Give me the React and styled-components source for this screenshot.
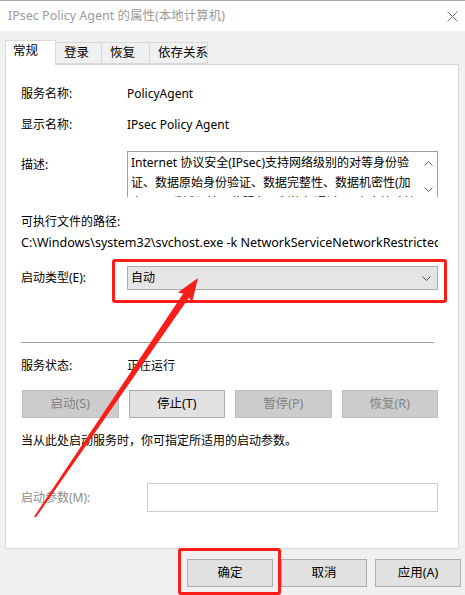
import React from "react";
import styled, { createGlobalStyle } from "styled-components";

const Global = createGlobalStyle`
	html, body {
		margin: 0;
		padding: 0;
		background: #f0f0f0;
	}
	* {
		box-sizing: border-box;
	}
`;

const Window = styled.div`
	position: relative;
	width: 465px;
	height: 595px;
	overflow: hidden;
	background: #f0f0f0;
	font-family: "Noto Sans", "Noto Sans CJK SC", sans-serif;
	font-size: 12px;
	line-height: 20px;
	color: #000;
	display: flex;
	flex-direction: column;
`;

const TitleBar = styled.div`
	height: 31px;
	background: #fff;
	border-top: 1px solid #a6a6a6;
	display: flex;
	align-items: center;
	justify-content: space-between;
	padding: 0 7px 0 8px;
	color: #9b9b9b;
	font-size: 12.5px;
`;

const TabStrip = styled.div`
	display: flex;
	align-items: flex-end;
	margin: 9px 0 0 5px;
	height: 24px;
	position: relative;
	z-index: 1;
`;

const Tab = styled.div`
	width: ${(p) => p.w}px;
	height: ${(p) => (p.active ? 25 : 22)}px;
	margin-bottom: ${(p) => (p.active ? -1 : 0)}px;
	background: ${(p) => (p.active ? "#fff" : "#f0f0f0")};
	border: 1px solid #d9d9d9;
	border-bottom: ${(p) => (p.active ? "none" : "1px solid #d9d9d9")};
	border-left: ${(p) => (p.first || p.active ? "1px solid #d9d9d9" : "none")};
	padding-left: ${(p) => (p.active ? 7 : 8)}px;
	line-height: 20px;
	font-size: 12.5px;
	white-space: nowrap;
`;

const Panel = styled.div`
	margin-left: 5px;
	width: 454px;
	height: 485px;
	background: #fff;
	border: 1px solid #d9d9d9;
	padding: 0 20px 0 15px;
	display: flex;
	flex-direction: column;
`;

const Row = styled.div`
	display: flex;
	align-items: ${(p) => (p.top ? "flex-start" : "center")};
	height: ${(p) => p.h || 20}px;
	margin-top: ${(p) => p.mt}px;
	white-space: nowrap;
`;

const Label = styled.div`
	width: ${(p) => p.w || 106}px;
	flex: none;
	padding-top: ${(p) => p.pt || 0}px;
	color: ${(p) => (p.disabled ? "#8d8d8d" : "#000")};
`;

const PathText = styled.div`
	width: 418px;
	overflow: hidden;
	font-size: 12.5px;
`;

const DescBox = styled.div`
	flex: 1;
	height: 46px;
	border: 1px solid #a0a0a0;
	border-bottom: none;
	display: flex;
	overflow: hidden;
`;

const DescText = styled.div`
	flex: 1;
	min-width: 0;
	overflow: hidden;
	padding: 1px 0 0 3px;
	line-height: 20px;
	font-size: 12px;

	span {
		display: block;
		white-space: nowrap;
	}
`;

const ScrollBar = styled.div`
	width: 17px;
	flex: none;
	display: flex;
	flex-direction: column;
	justify-content: space-between;
	align-items: center;
	padding: 9px 0 5px;
`;

const Combo = styled.div`
	flex: 1;
	height: 24px;
	background: #e5e5e5;
	border: 1px solid #adadad;
	display: flex;
	align-items: center;
	justify-content: space-between;
	padding: 0 6px 0 3px;
`;

const Separator = styled.div`
	height: 1px;
	background: #a0a0a0;
	margin: 52px 4px 0 0;
`;

const ButtonGrid = styled.div`
	display: grid;
	grid-template-columns: repeat(4, 1fr);
	column-gap: 10px;
	margin: 14px 0 0 1px;
	height: 28px;
`;

const Button = styled.div`
	height: 28px;
	display: flex;
	align-items: center;
	justify-content: center;
	background: ${(p) => (p.disabled ? "#cccccc" : "#e1e1e1")};
	border: 1px solid ${(p) => (p.disabled ? "#bfbfbf" : "#adadad")};
	color: ${(p) => (p.disabled ? "#838383" : "#000")};
	font-size: 12.5px;
`;

const TextInput = styled.div`
	flex: 1;
	height: 29px;
	border: 1px solid #cccccc;
	background: #fff;
`;

const Footer = styled.div`
	display: flex;
	justify-content: flex-end;
	gap: 8px;
	margin-top: 10px;
	padding-right: 4px;
`;

const FooterButton = styled(Button)`
	width: 86px;
`;

const Highlight = styled.div`
	position: absolute;
	left: ${(p) => p.x}px;
	top: ${(p) => p.y}px;
	width: ${(p) => p.w}px;
	height: ${(p) => p.h}px;
	border: 3px solid #fb1d17;
	border-radius: 3px;
	pointer-events: none;
`;

const Overlay = styled.svg`
	position: absolute;
	left: 0;
	top: 0;
	pointer-events: none;
`;

const Chevron = ({ up, color = "#555" }) => (
	<svg width="9" height="5" viewBox="0 0 9 5">
		<path
			d={up ? "M0.5 4.5 L4.5 0.5 L8.5 4.5" : "M0.5 0.5 L4.5 4.5 L8.5 0.5"}
			fill="none"
			stroke={color}
			strokeWidth="1"
		/>
	</svg>
);

const tabs = [
	{ name: "常规", w: 51, active: true },
	{ name: "登录", w: 46 },
	{ name: "恢复", w: 48 },
	{ name: "依存关系", w: 58 },
];

const App = () => {
	return (
		<Window>
			<Global />
			<TitleBar>
				<span>IPsec Policy Agent 的属性(本地计算机)</span>
				<svg width="11" height="11" viewBox="0 0 11 11">
					<path d="M0.5 0.5 L10.5 10.5 M10.5 0.5 L0.5 10.5" stroke="#7a7a7a" strokeWidth="1" />
				</svg>
			</TitleBar>

			<TabStrip>
				{tabs.map((t, i) => (
					<Tab key={t.name} w={t.w} active={t.active} first={i === 0}>
						{t.name}
					</Tab>
				))}
			</TabStrip>

			<Panel>
				<Row mt={19}>
					<Label>服务名称:</Label>
					<span>PolicyAgent</span>
				</Row>
				<Row mt={11}>
					<Label>显示名称:</Label>
					<span>IPsec Policy Agent</span>
				</Row>
				<Row mt={16} h={46} top>
					<Label pt={4}>描述:</Label>
					<DescBox>
						<DescText>
							<span>Internet 协议安全(IPsec)支持网络级别的对等身份验</span>
							<span>证、数据原始身份验证、数据完整性、数据机密性(加</span>
							<span>密)以及重播保护。此服务强制执行通过 IP 安全策略管</span>
						</DescText>
						<ScrollBar>
							<Chevron up color="#606060" />
							<Chevron color="#606060" />
						</ScrollBar>
					</DescBox>
				</Row>
				<Row mt={15}>可执行文件的路径:</Row>
				<Row mt={1}>
					<PathText>C:\Windows\system32\svchost.exe -k NetworkServiceNetworkRestricted</PathText>
				</Row>
				<Row mt={13} h={24}>
					<Label>启动类型(E):</Label>
					<Combo>
						<span>自动</span>
						<Chevron />
					</Combo>
				</Row>
				<Separator />
				<Row mt={13}>
					<Label>服务状态:</Label>
					<span>正在运行</span>
				</Row>
				<ButtonGrid>
					<Button disabled>启动(S)</Button>
					<Button>停止(T)</Button>
					<Button disabled>暂停(P)</Button>
					<Button disabled>恢复(R)</Button>
				</ButtonGrid>
				<Row mt={13}>当从此处启动服务时，你可指定所适用的启动参数。</Row>
				<Row mt={32} h={29}>
					<Label w={126} disabled>
						启动参数(M):
					</Label>
					<TextInput />
				</Row>
			</Panel>

			<Footer>
				<FooterButton>确定</FooterButton>
				<FooterButton>取消</FooterButton>
				<FooterButton>应用(A)</FooterButton>
			</Footer>

			<Highlight x={112} y={259} w={335} h={44} />
			<Highlight x={178} y={548} w={103} h={47} />

			<Overlay width="465" height="595" viewBox="0 0 465 595">
				<polygon
					points="34.2,516.4 183.3,293.6 177.9,292.6 198,278 192.1,302.6 189.1,297.6 35.8,517.6"
					fill="#fb1d17"
				/>
			</Overlay>
		</Window>
	);
};

export default App;
